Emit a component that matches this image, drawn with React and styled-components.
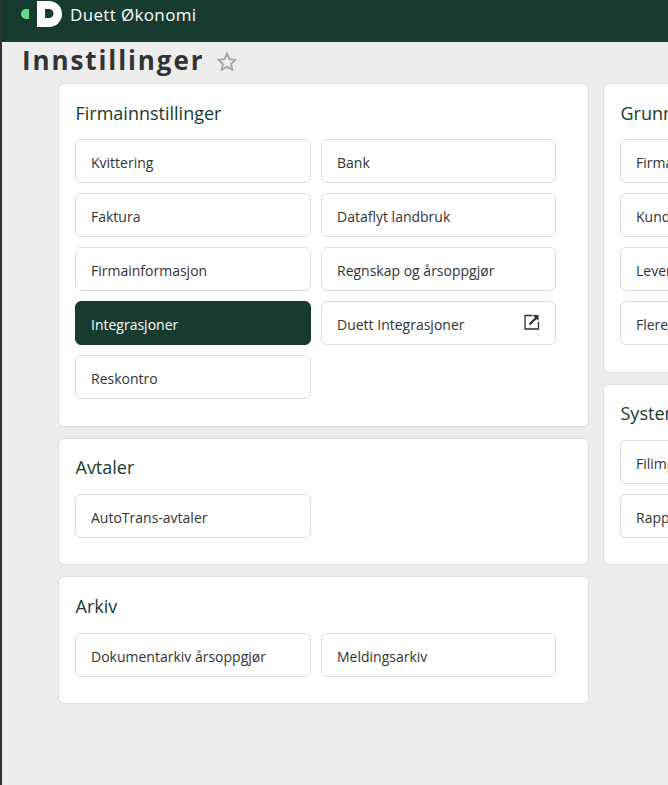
import React from "react";
import styled, { createGlobalStyle } from "styled-components";

const GlobalStyle = createGlobalStyle`
  html, body {
    margin: 0;
    height: 100%;
    overflow: hidden;
    background: #ededed;
    font-family: "Open Sans", "Liberation Sans", sans-serif;
  }
  #root {
    height: 100%;
  }
`;

const Page = styled.div`
  height: 785px;
  border-left: 2px solid #333333;
  display: flex;
  flex-direction: column;
  overflow: hidden;
`;

const Header = styled.header`
  height: 42px;
  flex-shrink: 0;
  background: #173b2f;
  display: flex;
  align-items: flex-start;
  padding-left: 19px;
`;

const Logo = styled.svg`
  width: 42px;
  height: 28px;
  flex-shrink: 0;
`;

const AppName = styled.span`
  color: #ffffff;
  font-size: 17px;
  line-height: 29px;
  letter-spacing: 0.35px;
  margin-left: 7px;
`;

const TitleRow = styled.div`
  height: 41px;
  flex-shrink: 0;
  display: flex;
  align-items: flex-start;
  padding-left: 20px;
`;

const Title = styled.h1`
  margin: 0;
  color: #333333;
  font-size: 26px;
  line-height: 36px;
  font-weight: 700;
  letter-spacing: 1.9px;
`;

const StarIcon = styled.svg`
  width: 22px;
  height: 22px;
  margin-left: 12px;
  margin-top: 9px;
`;

const Columns = styled.div`
  display: flex;
  align-items: flex-start;
  gap: 14px;
  padding-left: 56px;
`;

const Column = styled.div`
  width: 531px;
  flex-shrink: 0;
  display: flex;
  flex-direction: column;
  gap: 10.8px;
`;

const Card = styled.section`
  background: #ffffff;
  border: 1px solid #dddddd;
  border-radius: 6px;
  box-sizing: border-box;
  padding: 16px 16px 26.4px;
`;

const CardTitle = styled.h2`
  margin: 0 0 13.4px;
  padding: 0.5px 0 0 0.5px;
  color: #173b2f;
  font-size: 18px;
  line-height: 25.5px;
  font-weight: 400;
`;

const LinkGrid = styled.div`
  display: grid;
  grid-template-columns: 236px 235px;
  grid-auto-rows: 44px;
  gap: 10px;
`;

const LinkButton = styled.a`
  display: flex;
  align-items: center;
  justify-content: space-between;
  box-sizing: border-box;
  padding: 3px 15px 0;
  border: 1px solid ${props => (props.$active ? "#173b2f" : "#dddddd")};
  border-radius: 6px;
  background: ${props => (props.$active ? "#173b2f" : "#ffffff")};
  color: ${props => (props.$active ? "#ffffff" : "#333333")};
  font-size: 14px;
  white-space: nowrap;
`;

const ExternalIcon = styled.svg`
  width: 16px;
  height: 16px;
  margin-top: -5px;
`;

const sections = {
  left: [
    {
      title: "Firmainnstillinger",
      links: [
        { label: "Kvittering" },
        { label: "Bank" },
        { label: "Faktura" },
        { label: "Dataflyt landbruk" },
        { label: "Firmainformasjon" },
        { label: "Regnskap og årsoppgjør" },
        { label: "Integrasjoner", active: true },
        { label: "Duett Integrasjoner", external: true },
        { label: "Reskontro" }
      ]
    },
    { title: "Avtaler", links: [{ label: "AutoTrans-avtaler" }] },
    {
      title: "Arkiv",
      links: [{ label: "Dokumentarkiv årsoppgjør" }, { label: "Meldingsarkiv" }]
    }
  ],
  right: [
    {
      title: "Grunnregister",
      links: [
        { label: "Firmaer" },
        { label: "Kunder" },
        { label: "Leverandører" },
        { label: "Flere" }
      ]
    },
    {
      title: "System",
      links: [{ label: "Filimport" }, { label: "Rapporter" }]
    }
  ]
};

function RightGrid({ links }) {
  return (
    <LinkGrid>
      {links.flatMap(l => [
        <LinkButton key={l.label}>{l.label}</LinkButton>,
        <span key={l.label + "-empty"} />
      ])}
    </LinkGrid>
  );
}

function Section({ section, single }) {
  return (
    <Card>
      <CardTitle>{section.title}</CardTitle>
      {single ? (
        <RightGrid links={section.links} />
      ) : (
        <LinkGrid>
          {section.links.map(l => (
            <LinkButton key={l.label} $active={l.active}>
              {l.label}
              {l.external && (
                <ExternalIcon viewBox="0 0 16 16" fill="none" stroke="#2b2b2b">
                  <path d="M8 1.500H1v13.500h13.500V8" strokeWidth="1.300" />
                  <path d="M5.500 10.500 12 4" strokeWidth="2.200" />
                  <path d="M8.500 1h6v6z" fill="#2b2b2b" stroke="none" />
                </ExternalIcon>
              )}
            </LinkButton>
          ))}
        </LinkGrid>
      )}
    </Card>
  );
}

export default function App() {
  return (
    <>
      <GlobalStyle />
      <Page>
        <Header>
          <Logo viewBox="0 0 42 28">
            <path d="M5 9h3v10H5a5 5 0 0 1 0-10z" fill="#5fdc8e" />
            <path
              d="M16 1h12a13 13 0 0 1 0 26H16z M24 9v9h4a4.500 4.500 0 0 0 0-9z"
              fill="#ffffff"
              fillRule="evenodd"
            />
          </Logo>
          <AppName>Duett Økonomi</AppName>
        </Header>
        <TitleRow>
          <Title>Innstillinger</Title>
          <StarIcon viewBox="0 0 24 24" fill="none" stroke="#a3a3a3" strokeWidth="2">
            <path d="M12 3l2.800 5.900 6.400.8-4.700 4.400 1.200 6.400L12 17.300l-5.700 3.200 1.200-6.400L2.800 9.700l6.400-.8z" />
          </StarIcon>
        </TitleRow>
        <Columns>
          <Column>
            {sections.left.map(s => (
              <Section key={s.title} section={s} />
            ))}
          </Column>
          <Column>
            {sections.right.map(s => (
              <Section key={s.title} section={s} single />
            ))}
          </Column>
        </Columns>
      </Page>
    </>
  );
}
